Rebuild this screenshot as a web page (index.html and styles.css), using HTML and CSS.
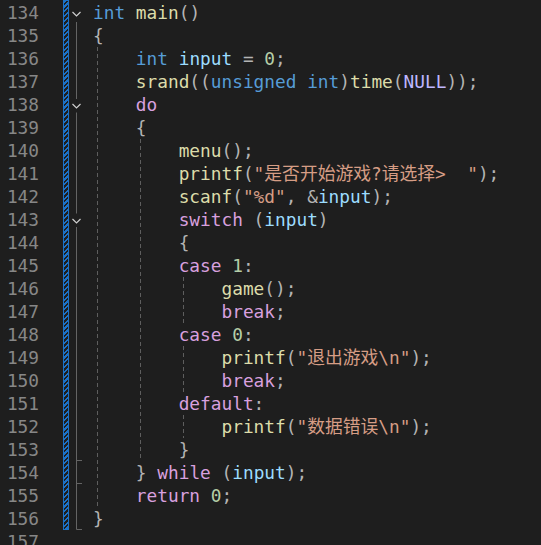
FILE: index.html
```html
<!DOCTYPE html>
<html>
<head>
<meta charset="utf-8">
<link rel="stylesheet" href="styles.css">
</head>
<body>
<div class="editor">
  <div class="gutter">
    <div>134</div><div>135</div><div>136</div><div>137</div><div>138</div><div>139</div>
    <div>140</div><div>141</div><div>142</div><div>143</div><div>144</div><div>145</div>
    <div>146</div><div>147</div><div>148</div><div>149</div><div>150</div><div>151</div>
    <div>152</div><div>153</div><div>154</div><div>155</div><div>156</div><div>157</div>
  </div>
  <div class="bar"></div>
  <svg class="fold" width="24" height="529" viewBox="0 0 24 529">
    <g fill="none" stroke="#646464" stroke-width="1">
      <line x1="7.5" y1="21" x2="7.5" y2="98"/>
      <line x1="7.5" y1="111.5" x2="7.5" y2="212.5"/>
      <line x1="7.5" y1="226" x2="7.5" y2="528.5"/>
      <line x1="7.5" y1="459.5" x2="13" y2="459.5"/>
      <line x1="7.5" y1="482.5" x2="13" y2="482.5"/>
      <line x1="7.5" y1="528.5" x2="13" y2="528.5"/>
    </g>
    <g fill="none" stroke="#cfcfcf" stroke-width="1.2">
      <polyline points="3.5,11 7.5,15 11.5,11"/>
      <polyline points="3.5,103 7.5,107 11.5,103"/>
      <polyline points="3.5,218 7.5,222 11.5,218"/>
    </g>
  </svg>
  <div class="code">
    <div class="ln"><span class="k">int</span> <span class="f">main</span><span class="p">()</span></div>
    <div class="ln"><span class="p">{</span></div>
    <div class="blk b0">
      <div class="ln">    <span class="k">int</span> <span class="v">input</span> <span class="p">=</span> <span class="n">0</span><span class="p">;</span></div>
      <div class="ln">    <span class="f">srand</span><span class="p">((</span><span class="k">unsigned</span> <span class="k">int</span><span class="p">)</span><span class="f">time</span><span class="p">(</span><span class="m">NULL</span><span class="p">));</span></div>
      <div class="ln">    <span class="c">do</span></div>
      <div class="ln">    <span class="p">{</span></div>
      <div class="blk b1">
        <div class="ln">        <span class="f">menu</span><span class="p">();</span></div>
        <div class="ln">        <span class="f">printf</span><span class="p">(</span><span class="s">"是否开始游戏?请选择&gt;  "</span><span class="p">);</span></div>
        <div class="ln">        <span class="f">scanf</span><span class="p">(</span><span class="s">"%d"</span><span class="p">,</span> <span class="p">&amp;</span><span class="v">input</span><span class="p">);</span></div>
        <div class="ln">        <span class="c">switch</span> <span class="p">(</span><span class="v">input</span><span class="p">)</span></div>
        <div class="ln">        <span class="p">{</span></div>
        <div class="ln">        <span class="c">case</span> <span class="n">1</span><span class="p">:</span></div>
        <div class="blk b2">
          <div class="ln">            <span class="f">game</span><span class="p">();</span></div>
          <div class="ln">            <span class="c">break</span><span class="p">;</span></div>
        </div>
        <div class="ln">        <span class="c">case</span> <span class="n">0</span><span class="p">:</span></div>
        <div class="blk b2">
          <div class="ln">            <span class="f">printf</span><span class="p">(</span><span class="s">"退出游戏\n"</span><span class="p">);</span></div>
          <div class="ln">            <span class="c">break</span><span class="p">;</span></div>
        </div>
        <div class="ln">        <span class="c">default</span><span class="p">:</span></div>
        <div class="blk b2">
          <div class="ln">            <span class="f">printf</span><span class="p">(</span><span class="s">"数据错误\n"</span><span class="p">);</span></div>
        </div>
        <div class="ln">        <span class="p">}</span></div>
      </div>
      <div class="ln">    <span class="p">}</span> <span class="c">while</span> <span class="p">(</span><span class="v">input</span><span class="p">);</span></div>
      <div class="ln">    <span class="c">return</span> <span class="n">0</span><span class="p">;</span></div>
    </div>
    <div class="ln"><span class="p">}</span></div>
    <div class="ln"> </div>
  </div>
</div>
</body>
</html>
```

FILE: styles.css
```css
html, body {
  margin: 0;
  padding: 0;
  background: #1e1e1e;
  overflow: hidden;
  height: 545px;
}

.editor {
  display: flex;
  align-items: flex-start;
  padding-top: 1px;
  font-family: "DejaVu Sans Mono", "Noto Sans CJK SC", monospace;
  font-size: 17.8px;
  line-height: 23px;
  color: #dcdcdc;
}

.gutter {
  width: 39px;
  text-align: right;
  color: #878787;
  flex: none;
}

.gutter div {
  height: 23px;
}

.bar {
  flex: none;
  margin-left: 24px;
  margin-top: -1px;
  width: 4px;
  height: 528px;
  border: 1px solid #1c72c8;
  background: repeating-linear-gradient(135deg, #1c72c8 0 1.6px, #1e1e1e 1.6px 3.4px);
}

.fold {
  flex: none;
  display: block;
}

.code {
  flex: 1;
}

.ln {
  height: 23px;
  white-space: pre;
}

.blk {
  background-image: repeating-linear-gradient(to bottom, #5e5e5e 0 4px, transparent 4px 7px);
  background-repeat: no-repeat;
  background-size: 1px 100%;
}

.b0 { background-position: 4px 0; }
.b1 { background-position: 47px 0; }
.b2 { background-position: 90px 0; }

.k { color: #569cd6; }
.c { color: #d8a0df; }
.f { color: #dcdcaa; }
.v { color: #9cdcfe; }
.n { color: #b5cea8; }
.s { color: #d69d85; }
.m { color: #beb7ff; }
.p { color: #b4b4b4; }
```
